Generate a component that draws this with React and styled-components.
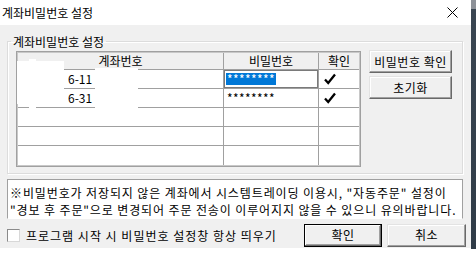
import React from 'react';
import styled, { createGlobalStyle } from 'styled-components';

const GlobalStyle = createGlobalStyle`
  html, body {
    margin: 0;
    padding: 0;
    background: #fff;
  }
  body {
    font-family: "Noto Sans CJK KR", "Noto Sans", sans-serif;
    font-size: 12px;
    color: #000;
  }
  * { box-sizing: border-box; }
`;

const Screen = styled.div`
  display: flex;
  align-items: flex-start;
  width: 476px;
  height: 276px;
  background: #fff;
`;

const Dialog = styled.div`
  width: 471px;
  height: 248px;
  background: #f0f0f0;
  display: flex;
  flex-direction: column;
`;

const Strip = styled.div`
  width: 5px;
  height: 249px;
  background: linear-gradient(#8d9198 0, #8d9198 9px, #3a4652 9px, #2f3b47 100%);
`;

const TitleBar = styled.div`
  height: 25px;
  flex: none;
  background: #fff;
  display: flex;
  align-items: center;
  justify-content: space-between;
  padding: 0 13px 0 2px;
  line-height: 16px;
`;

const Body = styled.div`
  flex: 1;
  display: flex;
  flex-direction: column;
  padding: 9px 5px 5px 7px;
`;

const Group = styled.fieldset`
  margin: 0 3px 0 0;
  padding: 2px 8px 6px 8px;
  border: 1px solid #dcdcdc;
  box-shadow: inset 1px 1px #fff, 1px 1px #fff;
  min-width: 0;
`;

const Legend = styled.legend`
  margin-left: -5px;
  padding: 0 2px;
  line-height: 15px;
`;

const GroupInner = styled.div`
  display: flex;
  align-items: flex-start;
  gap: 8px;
`;

const Frame = styled.div`
  position: relative;
  border: 1px solid #a0a0a0;
  background: #fff;
`;

const Grid = styled.div`
  display: grid;
  grid-template-columns: 206px 95px 40px;
  border: 1px solid #c8c8c8;
`;

const Cell = styled.div`
  height: ${p => (p.$head ? 17 : 19)}px;
  line-height: ${p => (p.$head ? 16 : 18)}px;
  border-right: ${p => (p.$lastCol ? 'none' : '1px solid #a0a0a0')};
  border-bottom: ${p => (p.$lastRow ? 'none' : '1px solid #a0a0a0')};
  background: ${p => (p.$head ? '#f0f0f0' : '#fff')};
  padding-left: ${p => p.$indent || 0}px;
  white-space: nowrap;
  overflow: hidden;
  display: flex;
  align-items: center;
  justify-content: ${p => (p.$head ? 'center' : 'flex-start')};
  box-shadow: ${p => (p.$edit ? 'inset 0 0 0 1px #7a7a7a' : 'none')};
`;

const Selected = styled.span`
  background: #0078d7;
  color: #fff;
  line-height: 12px;
  padding: 0 1px;
  letter-spacing: 0.4px;
`;

const Stars = styled.span`
  letter-spacing: 0.4px;
`;

const Mask = styled.div`
  position: absolute;
  background: #fff;
`;

const SideButtons = styled.div`
  display: flex;
  flex-direction: column;
  gap: 3px;
  margin-top: -1px;
  width: 83px;
`;

const Button = styled.button`
  font: inherit;
  color: #000;
  height: ${p => p.$h || 23}px;
  width: ${p => p.$w || 83}px;
  padding: 0;
  background: #f0f0f0;
  border: 1px solid;
  border-color: ${p => (p.$default ? '#000' : '#e3e3e3 #696969 #696969 #e3e3e3')};
  box-shadow: ${p =>
    p.$default
      ? 'inset -1px -1px #696969, inset 1px 1px #fff, inset -2px -2px #a0a0a0'
      : 'inset -1px -1px #a0a0a0, inset 1px 1px #fff'};
  line-height: 18px;
  letter-spacing: 0.5px;
`;

const Notice = styled.div`
  margin: 5px 3px 0 0;
  height: 40px;
  padding: 4px 2px 0 2px;
  background: #fff;
  border: 1px solid #a0a0a0;
  border-bottom-color: #fff;
  line-height: 17px;
  letter-spacing: 0.88px;
  white-space: nowrap;
  overflow: hidden;
`;

const BottomRow = styled.div`
  margin-top: 5px;
  display: flex;
  align-items: center;
  height: 22px;
`;

const CheckLabel = styled.label`
  display: flex;
  align-items: center;
  gap: 6px;
  letter-spacing: 1px;
`;

const CheckBox = styled.span`
  width: 13px;
  height: 13px;
  background: #fff;
  border: 1px solid;
  border-color: #8a8a8a #d8d8d8 #d8d8d8 #8a8a8a;
`;

const ButtonPair = styled.div`
  margin-left: auto;
  display: flex;
  gap: 5px;
`;

function CheckMark() {
  return (
    <svg width="12" height="12" viewBox="0 0 12 12">
      <path d="M1 6.5 L4.2 10 L11 1.5" fill="none" stroke="#000" strokeWidth="2.3" />
    </svg>
  );
}

function CloseIcon() {
  return (
    <svg width="11" height="11" viewBox="0 0 11 11">
      <path d="M0.5 0.5 L10.5 10.5 M10.5 0.5 L0.5 10.5" stroke="#000" strokeWidth="1" />
    </svg>
  );
}

const rows = [
  { acct: '6-11', pw: '********', checked: true, selected: true },
  { acct: '6-31', pw: '********', checked: true },
  {},
  {},
  {},
];

export default function App() {
  return (
    <>
      <GlobalStyle />
      <Screen>
        <Dialog>
          <TitleBar>
            <span>계좌비밀번호 설정</span>
            <CloseIcon />
          </TitleBar>
          <Body>
            <Group>
              <Legend>계좌비밀번호 설정</Legend>
              <GroupInner>
                <Frame>
                  <Grid>
                    <Cell $head>계좌번호</Cell>
                    <Cell $head>비밀번호</Cell>
                    <Cell $head $lastCol>확인</Cell>
                    {rows.map((r, i) => {
                      const last = i === rows.length - 1;
                      return (
                        <React.Fragment key={i}>
                          <Cell $indent={50} $lastRow={last}>{r.acct}</Cell>
                          <Cell $indent={r.selected ? 2 : 3} $edit={r.selected} $lastRow={last}>
                            {r.selected ? <Selected>{r.pw}</Selected> : <Stars>{r.pw}</Stars>}
                          </Cell>
                          <Cell $indent={5} $lastCol $lastRow={last}>
                            {r.checked && <CheckMark />}
                          </Cell>
                        </React.Fragment>
                      );
                    })}
                  </Grid>
                  <Mask style={{ left: 0, top: 9, width: 47, height: 43 }} />
                  <Mask style={{ left: 12, top: 7, width: 7, height: 52 }} />
                  <Mask style={{ left: 78, top: 16, width: 43, height: 42 }} />
                </Frame>
                <SideButtons>
                  <Button>비밀번호 확인</Button>
                  <Button>초기화</Button>
                </SideButtons>
              </GroupInner>
            </Group>
            <Notice>
              ※비밀번호가 저장되지 않은 계좌에서 시스템트레이딩 이용시, "자동주문" 설정이
              <br />
              "경보 후 주문"으로 변경되어 주문 전송이 이루어지지 않을 수 있으니 유의바랍니다.
            </Notice>
            <BottomRow>
              <CheckLabel>
                <CheckBox />
                프로그램 시작 시 비밀번호 설정창 항상 띄우기
              </CheckLabel>
              <ButtonPair>
                <Button $default $w={78}>확인</Button>
                <Button $w={79}>취소</Button>
              </ButtonPair>
            </BottomRow>
          </Body>
        </Dialog>
        <Strip />
      </Screen>
    </>
  );
}
